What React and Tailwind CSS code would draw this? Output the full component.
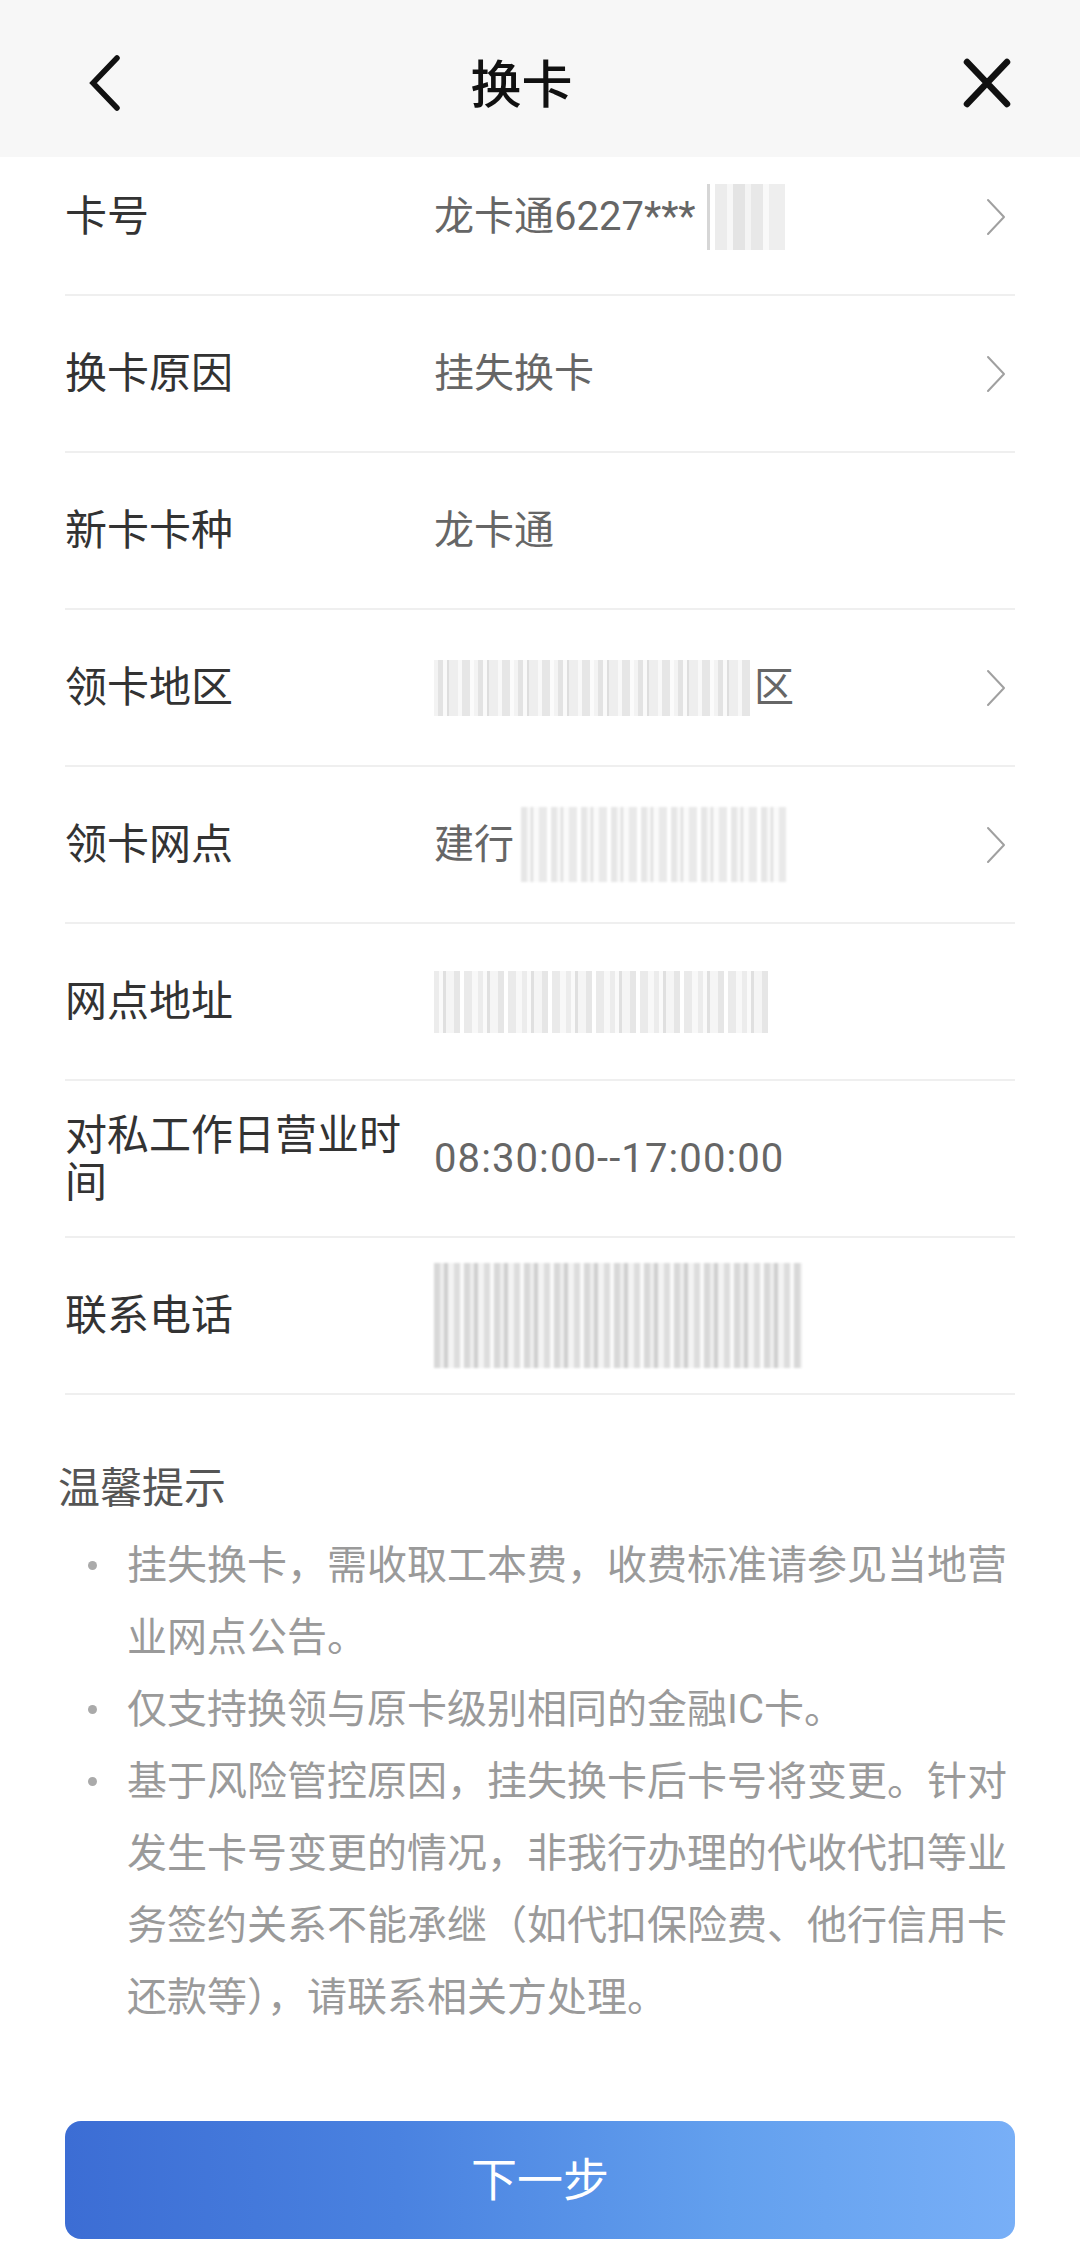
import React from "react";

const Chevron = () => (
  <svg width="22" height="38" viewBox="0 0 22 38" className="shrink-0 mr-[8px]">
    <path d="M3 2 L19 19 L3 36" fill="none" stroke="#a0a0a0" strokeWidth="2" strokeLinecap="round" strokeLinejoin="round" />
  </svg>
);

const Row = ({ label, children, arrow }) => (
  <div className="flex items-center h-[157px] border-b-2 border-[#efefef]">
    <div className="w-[369px] shrink-0 text-[42px] leading-[47px] text-[#333333]">{label}</div>
    <div className="flex-1 flex items-center text-[40px] text-[#666666] leading-[48px]">{children}</div>
    {arrow ? <Chevron /> : null}
  </div>
);

export default function App() {
  return (
    <div className="w-[1080px] h-[2244px] bg-white overflow-hidden flex flex-col font-['Roboto','Noto_Sans_CJK_SC',sans-serif]">
      <header className="relative z-10 h-[157px] shrink-0 bg-[#f7f7f7] flex items-center pt-[8px] pl-[88px] pr-[69px]">
        <svg width="34" height="56" viewBox="0 0 34 56" className="shrink-0">
          <path d="M29 3 L5 28 L29 53" fill="none" stroke="#111111" strokeWidth="5.5" strokeLinecap="round" strokeLinejoin="miter" />
        </svg>
        <h1 className="flex-1 text-center pr-[42px] pt-[6px] text-[51px] font-medium text-[#111111] leading-[56px]">换卡</h1>
        <svg width="48" height="50" viewBox="0 0 48 50" className="shrink-0">
          <path d="M4 4 L44 46 M44 4 L4 46" fill="none" stroke="#111111" strokeWidth="6.5" strokeLinecap="round" />
        </svg>
      </header>

      <div className="-mt-[18px] mx-[65px]">
        <Row label="卡号" arrow>
          <span>龙卡通6227***</span>
          <div className="ml-[11px] w-[78px] h-[66px] blur-[0.6px] bg-[linear-gradient(90deg,#d6d6d6_0_3px,#ffffff_3px_8px,#ececec_8px_20px,#f7f7f7_20px_26px,#e4e4e4_26px_38px,#f4f4f4_38px_44px,#e8e8e8_44px_56px,#f9f9f9_56px_62px,#eeeeee_62px_78px)]" />
        </Row>
        <Row label="换卡原因" arrow>
          <span>挂失换卡</span>
        </Row>
        <Row label="新卡卡种">
          <span>龙卡通</span>
        </Row>
        <Row label="领卡地区" arrow>
          <div className="w-[316px] h-[56px] blur-[0.6px] bg-[repeating-linear-gradient(90deg,#f3f3f3_0_4px,#e3e3e3_4px_9px,#fafafa_9px_13px,#dedede_13px_15px,#eeeeee_15px_24px,#f8f8f8_24px_28px,#e6e6e6_28px_36px,#fbfbfb_36px_40px)]" />
          <span className="ml-[4px]">区</span>
        </Row>
        <Row label="领卡网点" arrow>
          <span>建行</span>
          <div className="ml-[7px] w-[265px] h-[75px] blur-[0.8px] bg-[repeating-linear-gradient(90deg,#e6e6e6_0_6px,#f7f7f7_6px_10px,#dcdcdc_10px_12px,#fafafa_12px_18px,#e9e9e9_18px_26px,#ffffff_26px_30px)]" />
        </Row>
        <Row label="网点地址">
          <div className="w-[338px] h-[62px] blur-[0.6px] bg-[repeating-linear-gradient(90deg,#ececec_0_5px,#fafafa_5px_9px,#e0e0e0_9px_12px,#f5f5f5_12px_20px,#e6e6e6_20px_26px,#ffffff_26px_30px,#eaeaea_30px_38px,#f8f8f8_38px_44px)]" />
        </Row>
        <Row label="对私工作日营业时间">
          <span className="tracking-[1.1px]">08:30:00--17:00:00</span>
        </Row>
        <Row label="联系电话">
          <div className="w-[368px] h-[105px] blur-[1px] bg-[repeating-linear-gradient(90deg,#d8d8d8_0_6px,#eeeeee_6px_10px,#cfcfcf_10px_14px,#f3f3f3_14px_20px,#dddddd_20px_26px,#fafafa_26px_30px)]" />
        </Row>
      </div>

      <section className="pl-[58px] pr-[64px] pt-[69px]">
        <h2 className="text-[42px] leading-[50px] text-[#555555]">温馨提示</h2>
        <ul className="mt-[16px] pl-[30px] text-[40px] leading-[72px] text-[#9a9a9a]">
          <li className="flex">
            <span className="w-[39px] shrink-0 pt-[31px]"><span className="block w-[9px] h-[9px] rounded-full bg-[#aaaaaa]" /></span>
            <span className="flex-1">挂失换卡，需收取工本费，收费标准请参见当地营业网点公告。</span>
          </li>
          <li className="flex">
            <span className="w-[39px] shrink-0 pt-[31px]"><span className="block w-[9px] h-[9px] rounded-full bg-[#aaaaaa]" /></span>
            <span className="flex-1">仅支持换领与原卡级别相同的金融IC卡。</span>
          </li>
          <li className="flex">
            <span className="w-[39px] shrink-0 pt-[31px]"><span className="block w-[9px] h-[9px] rounded-full bg-[#aaaaaa]" /></span>
            <span className="flex-1">基于风险管控原因，挂失换卡后卡号将变更。针对发生卡号变更的情况，非我行办理的代收代扣等业务签约关系不能承继（如代扣保险费、他行信用卡还款等），请联系相关方处理。</span>
          </li>
        </ul>
      </section>

      <div className="mx-[65px] mt-[87px]">
        <button className="w-full h-[118px] rounded-[16px] bg-[linear-gradient(90deg,#3c6dd4_0%,#4a82e0_35%,#63a0ee_70%,#78aff7_100%)] text-white text-[46px] flex items-center justify-center">
          下一步
        </button>
      </div>
    </div>
  );
}
